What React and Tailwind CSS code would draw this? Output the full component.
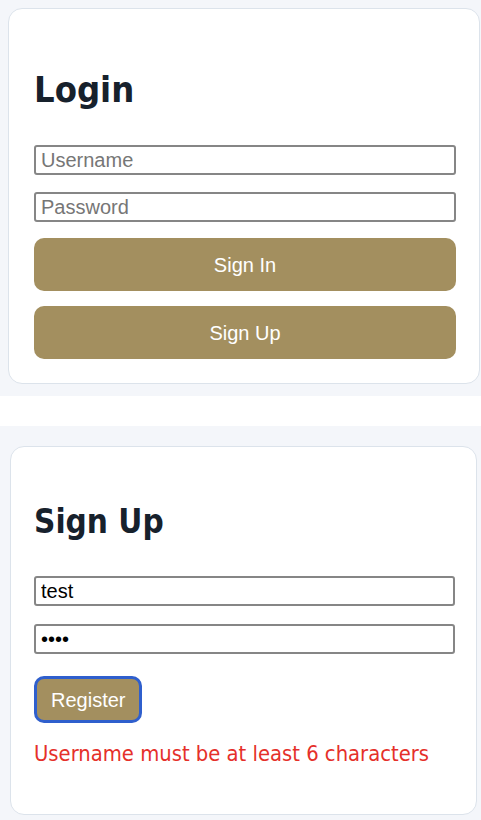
import { useState } from 'react';

const heading = "font-['DejaVu_Sans_Condensed','DejaVu_Sans',sans-serif] font-bold text-[#17212c] leading-none";
const field =
  "block w-full h-[30px] px-[5px] border-2 border-[#868686] rounded-[3px] bg-white text-[20px] text-black font-['Liberation_Sans',Arial,sans-serif] placeholder:text-[#767676] outline-none";
const goldBtn =
  "bg-[#a38f5f] text-white font-['Liberation_Sans',Arial,sans-serif] text-[20px]";

function LoginCard() {
  return (
    <section className="bg-[#f4f6fa] pt-2 pl-2 pr-[1px] pb-3">
      <div className="bg-white border border-[#dce3eb] rounded-[14px] pt-[63px] pb-[24px] pl-[25px] pr-[23px]">
        <h2 className={`${heading} text-[36px]`}>Login</h2>
        <div className="mt-[37px] flex flex-col gap-[17px]">
          <input className={field} placeholder="Username" />
          <input className={field} type="password" placeholder="Password" />
        </div>
        <div className="mt-[16px] flex flex-col gap-[15px]">
          <button className={`${goldBtn} h-[53px] w-full rounded-[10px]`}>Sign In</button>
          <button className={`${goldBtn} h-[53px] w-full rounded-[10px]`}>Sign Up</button>
        </div>
      </div>
    </section>
  );
}

function SignUpCard() {
  const [user, setUser] = useState('test');
  const [pass, setPass] = useState('abcd');

  return (
    <section className="bg-[#f4f6fa] pt-5 pl-[10px] pr-[4px] pb-[6px]">
      <div className="bg-white border border-[#dce3eb] rounded-[14px] pt-[58px] pb-[47px] pl-[23px] pr-[21px]">
        <h2 className={`${heading} text-[33px]`}>Sign Up</h2>
        <div className="mt-[38px] flex flex-col gap-[18px]">
          <input className={`${field} h-[29px] px-[3px]`} value={user} onChange={(e) => setUser(e.target.value)} />
          <input className={`${field} h-[29px] px-[3px] text-[14px]`} type="password" value={pass} onChange={(e) => setPass(e.target.value)} />
        </div>
        <button className={`${goldBtn} mt-[22px] h-[47px] px-[14px] text-[19px] rounded-[10px] border-[3px] border-[#2f5fcd]`}>
          Register
        </button>
        <p className="mt-[18px] text-[21.8px] leading-[26px] text-[#e5302a] font-['DejaVu_Sans_Condensed','DejaVu_Sans',sans-serif]">
          Username must be at least 6 characters
        </p>
      </div>
    </section>
  );
}

export default function App() {
  return (
    <div className="bg-white flex flex-col gap-[30px]">
      <LoginCard />
      <SignUpCard />
    </div>
  );
}
